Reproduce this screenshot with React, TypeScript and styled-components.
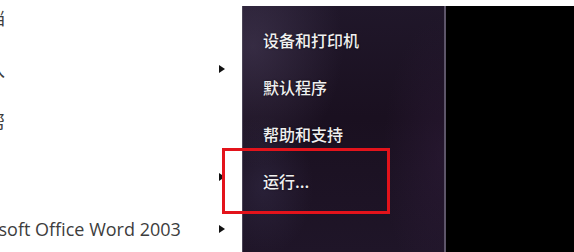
import React from "react";
import styled, { createGlobalStyle } from "styled-components";

const Global = createGlobalStyle`
  html, body { margin: 0; padding: 0; background: #ffffff; }
  body { width: 574px; height: 252px; overflow: hidden; }
  #root { width: 574px; height: 252px; }
`;

const Screen = styled.div`
  position: relative;
  width: 574px;
  height: 252px;
  display: flex;
  overflow: hidden;
  background: #ffffff;
`;

const ProgramPane = styled.div`
  width: 242px;
  flex: none;
  display: flex;
  flex-direction: column;
  background: #ffffff;
  overflow: hidden;
`;

const ProgramList = styled.div<{ $offset: number }>`
  display: flex;
  flex-direction: column;
  margin-top: ${(p) => p.$offset}px;
`;

const ProgramRow = styled.div`
  height: 52px;
  display: flex;
  align-items: center;
  justify-content: space-between;
  padding-right: 17px;
  overflow: hidden;
`;

const ProgramLabel = styled.span<{ $shift: number }>`
  margin-left: ${(p) => p.$shift}px;
  font-family: "Open Sans", "Noto Sans CJK SC", sans-serif;
  font-size: 18px;
  color: #3d3d3d;
  white-space: nowrap;
`;

const Arrow = styled.span`
  width: 0;
  height: 0;
  border-top: 4px solid transparent;
  border-bottom: 4px solid transparent;
  border-left: 6px solid #111111;
  flex: none;
`;

const ArrowSlot = styled.span`
  width: 6px;
  height: 8px;
  flex: none;
`;

const Separator = styled.div`
  height: 1px;
  margin: 3px 24px 0 2px;
  background: #dfe5ee;
`;

const RightSide = styled.div`
  flex: 1;
  display: flex;
  flex-direction: column;
`;

const TopStrip = styled.div`
  height: 6px;
  background: #ffffff;
  flex: none;
`;

const RightBody = styled.div`
  flex: 1;
  display: flex;
`;

const PlacesPane = styled.div`
  width: 204px;
  flex: none;
  box-sizing: border-box;
  border-left: 1px solid #4b4456;
  border-right: 2px solid #5d5569;
  padding: 10px 0 0 20px;
  display: flex;
  flex-direction: column;
  background:
    radial-gradient(ellipse 90px 120px at 10px 40px, rgba(90, 78, 110, 0.4), rgba(90, 78, 110, 0) 100%),
    radial-gradient(ellipse 50px 70px at 20px 180px, rgba(70, 64, 100, 0.3), rgba(70, 64, 100, 0) 100%),
    radial-gradient(ellipse 60px 140px at 200px 150px, rgba(55, 32, 68, 0.35), rgba(55, 32, 68, 0) 100%),
    linear-gradient(180deg, #20172a 0%, #1a1020 45%, #1f1528 100%);
`;

const PlaceItem = styled.div`
  height: 47px;
  display: flex;
  align-items: center;
  font-family: "Noto Sans CJK SC", sans-serif;
  font-size: 16px;
  font-weight: 500;
  color: #f0f0f0;
  white-space: nowrap;
  text-shadow: 0 0 2px rgba(0, 0, 0, 0.6);
`;

const Desktop = styled.div`
  flex: 1;
  background: #000000;
`;

const Highlight = styled.div`
  position: absolute;
  left: 222px;
  top: 148px;
  width: 168px;
  height: 66px;
  box-sizing: border-box;
  border: 3px solid #e3131b;
  pointer-events: none;
`;

type Program = { text: string; shift: number; arrow: boolean };

const pinned: Program[] = [
  { text: "档", shift: -13, arrow: false },
  { text: "入", shift: -13, arrow: true },
  { text: "帮", shift: -13, arrow: false },
];

const recent: Program[] = [
  { text: "", shift: 0, arrow: true },
  { text: "Microsoft Office Word 2003", shift: -49, arrow: true },
];

const places = ["设备和打印机", "默认程序", "帮助和支持", "运行..."];

function Rows({ items, offset }: { items: Program[]; offset: number }) {
  return (
    <ProgramList $offset={offset}>
      {items.map((p, i) => (
        <ProgramRow key={i}>
          <ProgramLabel $shift={p.shift}>{p.text}</ProgramLabel>
          {p.arrow ? <Arrow /> : <ArrowSlot />}
        </ProgramRow>
      ))}
    </ProgramList>
  );
}

export default function App() {
  return (
    <>
      <Global />
      <Screen>
        <ProgramPane>
          <Rows items={pinned} offset={-9} />
          <Separator />
          <Rows items={recent} offset={1} />
        </ProgramPane>
        <RightSide>
          <TopStrip />
          <RightBody>
            <PlacesPane>
              {places.map((t) => (
                <PlaceItem key={t}>{t}</PlaceItem>
              ))}
            </PlacesPane>
            <Desktop />
          </RightBody>
        </RightSide>
        <Highlight />
      </Screen>
    </>
  );
}
